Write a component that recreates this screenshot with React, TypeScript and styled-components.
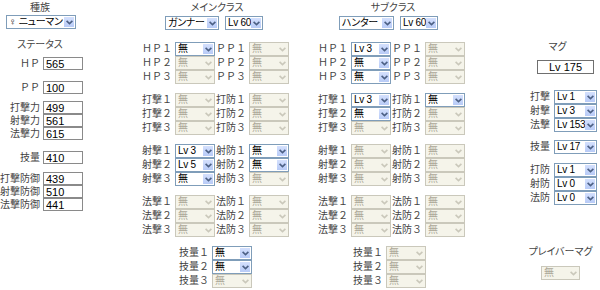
import React from 'react';
import styled, { createGlobalStyle } from 'styled-components';

const GlobalStyle = createGlobalStyle`
  html, body { margin: 0; padding: 0; background: #ffffff; }
  body {
    font-family: "Liberation Sans", "Noto Sans CJK JP", sans-serif;
    font-size: 11px;
    color: #444;
  }
`;

const Page = styled.div`
  width: 600px;
  height: 290px;
  overflow: hidden;
  display: grid;
  grid-template-columns: 144px 176px 195px 85px;
  align-items: start;
`;

const Column = styled.section<{ $w: number; $pt?: number }>`
  width: ${(p) => p.$w}px;
  padding-top: ${(p) => p.$pt ?? 0}px;
  display: flex;
  flex-direction: column;
`;

const Heading = styled.div<{ $mt?: number }>`
  height: 14px;
  line-height: 14px;
  margin-top: ${(p) => p.$mt ?? 0}px;
  text-align: center;
  font-size: 10px;
  font-feature-settings: "palt";
  color: #444;
  white-space: nowrap;
`;

const Label = styled.span`
  display: flex;
  justify-content: flex-end;
  white-space: nowrap;
  font-size: 10px;
  line-height: 12px;
  color: #444;
`;

/* ---------- select mock ---------- */
const SelectBox = styled.div<{ $w: number; $off?: boolean }>`
  box-sizing: border-box;
  width: ${(p) => p.$w}px;
  height: 14px;
  border: 1px solid ${(p) => (p.$off ? '#cac8bb' : '#7f9db9')};
  background: ${(p) => (p.$off ? '#f5f4ea' : '#ffffff')};
  display: flex;
  align-items: stretch;
`;

const SelectText = styled.span<{ $off?: boolean }>`
  flex: 1;
  min-width: 0;
  padding-left: 2px;
  line-height: 12px;
  font-size: 10px;
  letter-spacing: -0.3px;
  font-feature-settings: "palt";
  white-space: nowrap;
  overflow: hidden;
  color: ${(p) => (p.$off ? '#aca899' : '#000')};
`;

const ArrowBtn = styled.span<{ $off?: boolean }>`
  width: 10px;
  margin: 1px 1px 1px 0;
  flex: none;
  display: flex;
  align-items: center;
  justify-content: center;
  background: ${(p) => (p.$off ? 'transparent' : 'linear-gradient(#d4e0fd, #b8cbf7)')};
`;

const Select: React.FC<{ w: number; value?: string; off?: boolean }> = ({ w, value = '無', off }) => (
  <SelectBox $w={w} $off={off}>
    <SelectText $off={off}>{value}</SelectText>
    <ArrowBtn $off={off}>
      <svg width="7" height="5" viewBox="0 0 7 5">
        <path d="M0.6 0.8 L3.5 3.6 L6.4 0.8" fill="none" stroke={off ? '#cac8bb' : '#4d6185'} strokeWidth="1.6" />
      </svg>
    </ArrowBtn>
  </SelectBox>
);

/* ---------- left status column ---------- */
const RaceWrap = styled.div`
  padding-left: 6px;
`;

const StatGroup = styled.div<{ $mt: number }>`
  margin-top: ${(p) => p.$mt}px;
  display: flex;
  flex-direction: column;
`;

const StatRow = styled.div`
  display: grid;
  grid-template-columns: 40px 40px;
  column-gap: 3px;
  align-items: center;
  height: 13px;
`;

const StatInput = styled.input`
  box-sizing: border-box;
  width: 40px;
  height: 13px;
  margin: 0;
  padding: 0 2px;
  border: 1px solid #8a8a8a;
  background: #fff;
  font-family: "Liberation Sans", sans-serif;
  font-size: 11px;
  line-height: 11px;
  color: #000;
`;

/* ---------- class columns ---------- */
const ClassRow = styled.div<{ $pl: number }>`
  display: flex;
  gap: 6px;
  padding-left: ${(p) => p.$pl}px;
  margin-top: 1px;
`;

const SlotGroup = styled.div<{ $mt: number }>`
  margin-top: ${(p) => p.$mt}px;
  display: grid;
  grid-template-columns: 28px 40px 28px 40px;
  column-gap: 3px;
  grid-auto-rows: 14px;
  align-items: center;
`;

const SkillGroup = styled.div<{ $mt: number; $pl: number }>`
  margin-top: ${(p) => p.$mt}px;
  padding-left: ${(p) => p.$pl}px;
  display: grid;
  grid-template-columns: 28px 40px;
  column-gap: 3px;
  grid-auto-rows: 14px;
  align-items: center;
`;

/* ---------- mag column ---------- */
const MagLevel = styled.div`
  box-sizing: border-box;
  margin: 6px 0 0 22px;
  width: 57px;
  height: 14px;
  border: 1px solid #6f6f6f;
  text-align: center;
  line-height: 12px;
  font-size: 11px;
  color: #000;
`;

const MagGroup = styled.div<{ $mt: number }>`
  margin-top: ${(p) => p.$mt}px;
  display: grid;
  grid-template-columns: 35px 43px;
  column-gap: 4px;
  grid-auto-rows: 14px;
  align-items: center;
`;

const MagFooter = styled.div`
  margin-top: 40px;
  display: flex;
  flex-direction: column;
  align-items: center;
  padding-left: 6px;
  gap: 7px;
`;

type Slot = { label: string; value?: string; off?: boolean };

const SlotBlock: React.FC<{ rows: [Slot, Slot][]; mt: number }> = ({ rows, mt }) => (
  <SlotGroup $mt={mt}>
    {rows.map(([a, b], i) => (
      <React.Fragment key={i}>
        <Label>{a.label}</Label>
        <Select w={40} value={a.value} off={a.off} />
        <Label>{b.label}</Label>
        <Select w={40} value={b.value} off={b.off} />
      </React.Fragment>
    ))}
  </SlotGroup>
);

const SkillBlock: React.FC<{ rows: Slot[]; mt: number; pl: number }> = ({ rows, mt, pl }) => (
  <SkillGroup $mt={mt} $pl={pl}>
    {rows.map((r, i) => (
      <React.Fragment key={i}>
        <Label>{r.label}</Label>
        <Select w={40} value={r.value} off={r.off} />
      </React.Fragment>
    ))}
  </SkillGroup>
);

const StatBlock: React.FC<{ rows: [string, string][]; mt: number }> = ({ rows, mt }) => (
  <StatGroup $mt={mt}>
    {rows.map(([l, v]) => (
      <StatRow key={l}>
        <Label>{l}</Label>
        <StatInput readOnly value={v} />
      </StatRow>
    ))}
  </StatGroup>
);

const MagBlock: React.FC<{ rows: [string, string][]; mt: number }> = ({ rows, mt }) => (
  <MagGroup $mt={mt}>
    {rows.map(([l, v]) => (
      <React.Fragment key={l}>
        <Label>{l}</Label>
        <Select w={43} value={v} />
      </React.Fragment>
    ))}
  </MagGroup>
);

const S = (label: string, value?: string): Slot => ({ label, value });
const D = (label: string): Slot => ({ label, off: true });

export default function App() {
  return (
    <>
      <GlobalStyle />
      <Page>
        <Column $w={80} $pt={1}>
          <Heading>種族</Heading>
          <RaceWrap>
            <Select w={70} value="♀ ニューマン" />
          </RaceWrap>
          <Heading $mt={9}>ステータス</Heading>
          <StatBlock mt={5} rows={[['ＨＰ', '565']]} />
          <StatBlock mt={11} rows={[['ＰＰ', '100']]} />
          <StatBlock mt={7} rows={[['打撃力', '499'], ['射撃力', '561'], ['法撃力', '615']]} />
          <StatBlock mt={11} rows={[['技量', '410']]} />
          <StatBlock mt={8} rows={[['打撃防御', '439'], ['射撃防御', '510'], ['法撃防御', '441']]} />
        </Column>

        <Column $w={146} $pt={1}>
          <Heading>メインクラス</Heading>
          <ClassRow $pl={21}>
            <Select w={54} value="ガンナー" />
            <Select w={38} value="Lv 60" />
          </ClassRow>
          <SlotBlock mt={12} rows={[[S('ＨＰ１'), D('ＰＰ１')], [D('ＨＰ２'), D('ＰＰ２')], [D('ＨＰ３'), D('ＰＰ３')]]} />
          <SlotBlock mt={9} rows={[[D('打撃１'), D('打防１')], [D('打撃２'), D('打防２')], [D('打撃３'), D('打防３')]]} />
          <SlotBlock mt={9} rows={[[S('射撃１', 'Lv 3'), S('射防１')], [S('射撃２', 'Lv 5'), S('射防２')], [S('射撃３'), D('射防３')]]} />
          <SlotBlock mt={9} rows={[[D('法撃１'), D('法防１')], [D('法撃２'), D('法防２')], [D('法撃３'), D('法防３')]]} />
          <SkillBlock mt={9} pl={37} rows={[S('技量１'), S('技量２'), D('技量３')]} />
        </Column>

        <Column $w={146} $pt={1}>
          <Heading>サブクラス</Heading>
          <ClassRow $pl={19}>
            <Select w={55} value="ハンター" />
            <Select w={38} value="Lv 60" />
          </ClassRow>
          <SlotBlock mt={12} rows={[[S('ＨＰ１', 'Lv 3'), D('ＰＰ１')], [S('ＨＰ２'), D('ＰＰ２')], [S('ＨＰ３'), D('ＰＰ３')]]} />
          <SlotBlock mt={9} rows={[[S('打撃１', 'Lv 3'), S('打防１')], [S('打撃２'), D('打防２')], [D('打撃３'), D('打防３')]]} />
          <SlotBlock mt={9} rows={[[D('射撃１'), D('射防１')], [D('射撃２'), D('射防２')], [D('射撃３'), D('射防３')]]} />
          <SlotBlock mt={9} rows={[[D('法撃１'), D('法防１')], [D('法撃２'), D('法防２')], [D('法撃３'), D('法防３')]]} />
          <SkillBlock mt={9} pl={35} rows={[D('技量１'), D('技量２'), D('技量３')]} />
        </Column>

        <Column $w={85} $pt={40}>
          <Heading>マグ</Heading>
          <MagLevel>Lv 175</MagLevel>
          <MagBlock mt={16} rows={[['打撃', 'Lv 1'], ['射撃', 'Lv 3'], ['法撃', 'Lv 153']]} />
          <MagBlock mt={8} rows={[['技量', 'Lv 17']]} />
          <MagBlock mt={9} rows={[['打防', 'Lv 1'], ['射防', 'Lv 0'], ['法防', 'Lv 0']]} />
          <MagFooter>
            <Heading>プレイバーマグ</Heading>
            <Select w={39} off />
          </MagFooter>
        </Column>
      </Page>
    </>
  );
}
